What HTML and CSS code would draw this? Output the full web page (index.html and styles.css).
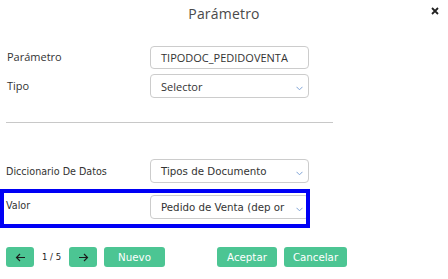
FILE: index.html
```html
<!DOCTYPE html>
<html lang="es">
<head>
    <meta charset="UTF-8">
    <meta name="viewport" content="width=device-width, initial-scale=1.0">
    <title>Parámetro</title>
    <link rel="stylesheet" href="styles.css">
</head>
<body>
    <div class="dialog">
        <!-- Cabecera -->
        <header class="dialog-head">
            <span></span>
            <h1>Parámetro</h1>
            <button class="close" aria-label="Cerrar">
                <svg width="8" height="8" viewBox="0 0 8 8">
                    <path d="M1 1 L7 7 M7 1 L1 7" stroke="#222" stroke-width="1.8" fill="none"/>
                </svg>
            </button>
        </header>

        <!-- Datos del parámetro -->
        <div class="form">
            <div class="row row-first">
                <label class="label-open">Parámetro</label>
                <div class="field field-open">TIPODOC_PEDIDOVENTA</div>
            </div>
            <div class="row row-second">
                <label class="label-open">Tipo</label>
                <div class="field field-open select">
                    <span>Selector</span>
                    <svg class="chevron" width="7" height="5" viewBox="0 0 7 5"><path d="M0.5 0.8 L3.5 3.8 L6.5 0.8" stroke="#7fa3d6" stroke-width="1" fill="none"/></svg>
                </div>
            </div>
        </div>

        <hr class="divider">

        <div class="form">
            <div class="row row-dict">
                <label>Diccionario De Datos</label>
                <div class="field select">
                    <span>Tipos de Documento</span>
                    <svg class="chevron" width="7" height="5" viewBox="0 0 7 5"><path d="M0.5 0.8 L3.5 3.8 L6.5 0.8" stroke="#7fa3d6" stroke-width="1" fill="none"/></svg>
                </div>
            </div>
            <div class="row row-value">
                <label class="label-top">Valor</label>
                <div class="field select">
                    <span>Pedido de Venta (dep or</span>
                    <svg class="chevron" width="7" height="5" viewBox="0 0 7 5"><path d="M0.5 0.8 L3.5 3.8 L6.5 0.8" stroke="#7fa3d6" stroke-width="1" fill="none"/></svg>
                </div>
            </div>
        </div>

        <!-- Botones -->
        <div class="actions">
            <button class="btn btn-arrow" aria-label="Anterior">
                <svg width="11" height="9" viewBox="0 0 11 9"><path d="M10 4.5 H1.5 M5 1 L1.5 4.5 L5 8" stroke="#1c1c1c" stroke-width="1.2" fill="none"/></svg>
            </button>
            <span class="pager">1 / 5</span>
            <button class="btn btn-arrow" aria-label="Siguiente">
                <svg width="11" height="9" viewBox="0 0 11 9"><path d="M1 4.5 H9.5 M6 1 L9.5 4.5 L6 8" stroke="#1c1c1c" stroke-width="1.2" fill="none"/></svg>
            </button>
            <button class="btn btn-new">Nuevo</button>
            <button class="btn btn-accept">Aceptar</button>
            <button class="btn btn-cancel">Cancelar</button>
        </div>
    </div>
</body>
</html>
```

FILE: styles.css
```css
/* Global Styles */
body {
    margin: 0;
    font-family: 'DejaVu Sans', sans-serif;
    background-color: #ffffff;
    color: #333333;
}

.dialog {
    width: 448px;
}

/* Header */
.dialog-head {
    display: grid;
    grid-template-columns: 1fr auto 1fr;
    align-items: center;
    height: 28px;
}

.dialog-head h1 {
    margin: -2px 0 0 0;
    font-family: 'Open Sans', sans-serif;
    font-weight: 400;
    font-size: 14px;
    color: #4a4a4a;
    letter-spacing: 0.2px;
}

.close {
    justify-self: end;
    margin-right: 9px;
    margin-top: -6px;
    padding: 0;
    border: none;
    background: none;
    display: flex;
}

/* Form rows */
.form {
    padding: 0 6px;
}

.row {
    display: flex;
    align-items: center;
}

.row label {
    width: 144px;
    flex: none;
    font-size: 9.6px;
    color: #333333;
}

.row .label-open {
    font-family: 'Open Sans', sans-serif;
    font-size: 11px;
    padding-left: 1px;
    width: 143px;
    margin-top: -2px;
}

.row-first {
    margin-top: 18px;
}

.row-second {
    margin-top: 5px;
}

.row-dict {
    margin-top: 36px;
}

.row-value {
    margin-top: 10px;
    margin-left: -2px;
    padding-left: 2px;
    width: 300px;
    height: 31px;
    align-items: flex-start;
    outline: 4px solid #0000f5;
}

.row-value .label-top {
    margin-top: 7px;
}

.row-value .field {
    margin-top: 2px;
}

.field {
    box-sizing: border-box;
    width: 159px;
    height: 24px;
    flex: none;
    border: 1px solid #cccccc;
    border-radius: 4px;
    padding: 0 5px 0 10px;
    display: flex;
    align-items: center;
    font-size: 10.25px;
    color: #333333;
    white-space: nowrap;
    overflow: hidden;
}

.field-open {
    font-family: 'Open Sans', sans-serif;
    font-size: 11px;
}

.row-first .field {
    height: 23px;
}

.select {
    justify-content: space-between;
}

.chevron {
    margin-top: 5px;
    flex: none;
}

.divider {
    margin: 24px 0 0 6px;
    width: 327px;
    border: none;
    border-top: 1px solid #c8c8c8;
}

/* Buttons */
.actions {
    display: flex;
    align-items: center;
    padding-left: 6px;
    margin-top: 23px;
}

.btn {
    height: 20px;
    border: none;
    border-radius: 3px;
    background-color: #4cc593;
    color: #ffffff;
    font-family: 'DejaVu Sans', sans-serif;
    font-size: 10.25px;
    padding: 0;
    display: flex;
    align-items: center;
    justify-content: center;
}

.btn-arrow {
    width: 28px;
}

.pager {
    width: 35px;
    text-align: center;
    font-size: 8.5px;
    color: #222222;
}

.btn-new {
    width: 61px;
    margin-left: 7px;
}

.btn-accept {
    width: 60px;
    margin-left: 52px;
}

.btn-cancel {
    width: 63px;
    margin-left: 7px;
}
```
